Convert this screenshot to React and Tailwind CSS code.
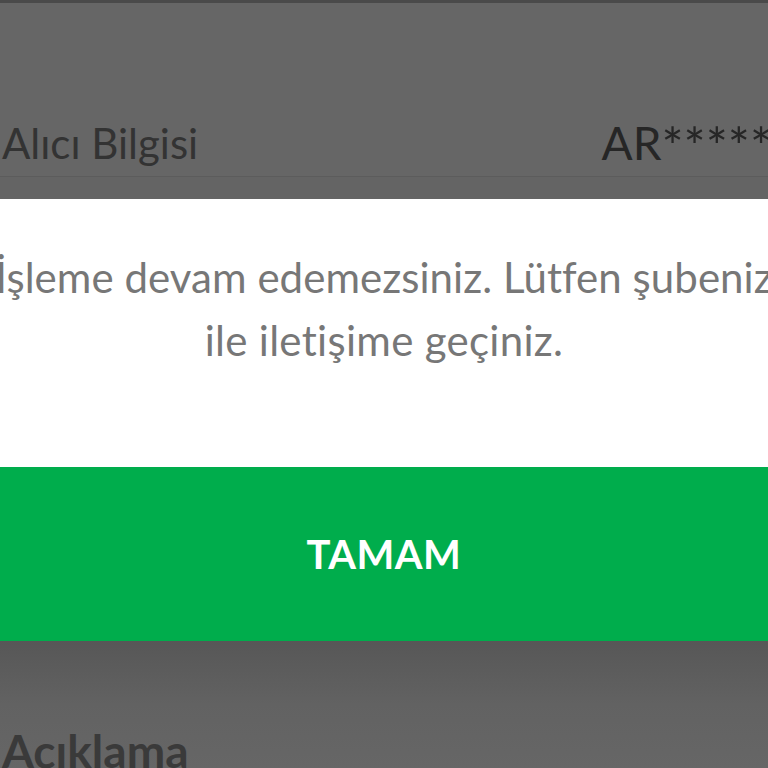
import React from 'react';

const App = () => {
  return (
    <div
      className="w-[768px] h-[768px] overflow-hidden bg-[#666666] flex flex-col"
      style={{ fontFamily: 'Lato, "Noto Sans", sans-serif' }}
    >
      <div className="h-[3px] bg-[#4a4a4a]" />

      <div className="h-[174px] flex items-end justify-between pb-[8px] border-b border-[#5c5c5c]">
        <span className="text-[42px] leading-none text-[#333333] pl-[2px] pb-[4px]">Alıcı Bilgisi</span>
        <span className="text-[46px] leading-none text-[#262626] whitespace-nowrap mr-[-4px] mb-[-4px]">
          AR<span className="text-[52px] leading-none align-top">*****</span>
        </span>
      </div>
      <div className="h-[22px] bg-[#646464]" />

      <div className="bg-white h-[268px] flex flex-col items-center pt-[47px] overflow-hidden">
        <span className="whitespace-nowrap text-[42px] tracking-[0.05px] leading-[63px] text-[#777777]">
          İşleme devam edemezsiniz. Lütfen şubeniz
        </span>
        <span className="whitespace-nowrap text-[42px] tracking-[0.3px] leading-[63px] text-[#777777]">
          ile iletişime geçiniz.
        </span>
      </div>

      <button className="h-[174px] w-full bg-[#00ad4c] flex items-center justify-center">
        <span className="text-[40px] font-bold text-white tracking-[0.5px]">TAMAM</span>
      </button>

      <div className="flex-1 bg-gradient-to-b from-[#575757] to-[#666666] via-[#626262] flex items-end">
        <span className="text-[46px] font-bold leading-none text-[#3a3a3a] pl-[2px] mb-[-6px]">Açıklama</span>
      </div>
    </div>
  );
};

export default App;
